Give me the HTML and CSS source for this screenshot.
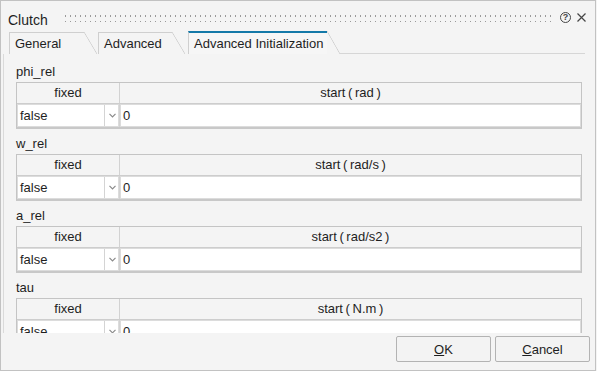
FILE: index.html
```html
<!DOCTYPE html>
<html lang="en">
<head>
  <meta charset="UTF-8" />
  <title>Clutch</title>
  <link rel="stylesheet" href="styles.css">
</head>
<body>
  <div class="dialog">
    <div class="titlebar">
      <span class="title">Clutch</span>
      <div class="grip"></div>
      <span class="help">?</span>
      <svg class="close" width="9" height="9" viewBox="0 0 9 9">
        <path d="M0.5 0.5 L8.5 8.5 M8.5 0.5 L0.5 8.5" stroke="#454545" stroke-width="1.2" fill="none"/>
      </svg>
    </div>

    <div class="tabs">
      <div class="tab tab-general">General</div>
      <div class="tab tab-advanced">Advanced</div>
      <div class="tab tab-active">Advanced Initialization</div>
      <div class="tab-fill"></div>
    </div>

    <div class="pane">
      <div class="section">
        <div class="var-label">phi_rel</div>
        <div class="grid">
          <div class="head first">fixed</div>
          <div class="head">start ( rad )</div>
          <div class="cell combo first">
            <span class="combo-text">false</span>
            <span class="combo-arrow"><svg width="7" height="5" viewBox="0 0 7 5"><path d="M0.5 0.8 L3.5 3.8 L6.5 0.8" stroke="#8a8a8a" stroke-width="1.2" fill="none"/></svg></span>
          </div>
          <div class="cell value">0</div>
        </div>
      </div>

      <div class="section">
        <div class="var-label">w_rel</div>
        <div class="grid">
          <div class="head first">fixed</div>
          <div class="head">start ( rad/s )</div>
          <div class="cell combo first">
            <span class="combo-text">false</span>
            <span class="combo-arrow"><svg width="7" height="5" viewBox="0 0 7 5"><path d="M0.5 0.8 L3.5 3.8 L6.5 0.8" stroke="#8a8a8a" stroke-width="1.2" fill="none"/></svg></span>
          </div>
          <div class="cell value">0</div>
        </div>
      </div>

      <div class="section">
        <div class="var-label">a_rel</div>
        <div class="grid">
          <div class="head first">fixed</div>
          <div class="head">start ( rad/s2 )</div>
          <div class="cell combo first">
            <span class="combo-text">false</span>
            <span class="combo-arrow"><svg width="7" height="5" viewBox="0 0 7 5"><path d="M0.5 0.8 L3.5 3.8 L6.5 0.8" stroke="#8a8a8a" stroke-width="1.2" fill="none"/></svg></span>
          </div>
          <div class="cell value">0</div>
        </div>
      </div>

      <div class="section">
        <div class="var-label">tau</div>
        <div class="grid">
          <div class="head first">fixed</div>
          <div class="head">start ( N.m )</div>
          <div class="cell combo first">
            <span class="combo-text">false</span>
            <span class="combo-arrow"><svg width="7" height="5" viewBox="0 0 7 5"><path d="M0.5 0.8 L3.5 3.8 L6.5 0.8" stroke="#8a8a8a" stroke-width="1.2" fill="none"/></svg></span>
          </div>
          <div class="cell value">0</div>
        </div>
      </div>
    </div>

    <div class="footer">
      <button type="button" class="btn"><u>O</u>K</button>
      <button type="button" class="btn"><u>C</u>ancel</button>
    </div>
  </div>
</body>
</html>
```

FILE: styles.css
```css
* {
  box-sizing: border-box;
}
body {
  margin: 0;
  background: #f4f4f4;
  font-family: "Liberation Sans", Arial, sans-serif;
  font-size: 13px;
  color: #1e1e1e;
}
.dialog {
  width: 596px;
  height: 371px;
  border: 1px solid #c2c2c2;
  background: #f4f4f4;
  display: flex;
  flex-direction: column;
  overflow: hidden;
}

/* title bar */
.titlebar {
  height: 30px;
  display: flex;
  align-items: center;
  padding: 0 9px 0 7px;
}
.title {
  font-size: 14px;
  padding-top: 7px;
}
.grip {
  flex: 1;
  height: 8px;
  margin: 4px 8px 0 15px;
  background-image: radial-gradient(circle, #9a9a9a 0.9px, transparent 1.1px);
  background-size: 5px 6px;
  background-position: 0 -1px;
}
.help {
  width: 11px;
  height: 11px;
  border: 1.2px solid #454545;
  border-radius: 50%;
  font-size: 9px;
  font-weight: bold;
  line-height: 9px;
  text-align: center;
  color: #454545;
  margin-top: 3px;
  margin-right: 6px;
}
.close {
  margin-top: 3px;
}

/* tabs */
.tabs {
  height: 23px;
  display: flex;
  align-items: flex-end;
  padding-left: 8px;
  padding-right: 10px;
}
.tab {
  position: relative;
  height: 22px;
  border-top: 1px solid #cfcfcf;
  border-left: 1px solid #cfcfcf;
  padding: 3px 0 0 5px;
  white-space: nowrap;
}
.tab::after {
  content: "";
  position: absolute;
  top: -1px;
  left: 100%;
  width: 13px;
  height: calc(100% + 1px);
  background: linear-gradient(to top right, transparent calc(50% - 0.7px), #cfcfcf, transparent calc(50% + 0.7px));
}
.tab-general {
  width: 75px;
  margin-right: 14px;
}
.tab-advanced {
  width: 74px;
  margin-right: 16px;
}
.tab-active {
  width: 139px;
  height: 23px;
  border-top: 2px solid #1479a8;
  padding-top: 3px;
  background: #f6f6f6;
}
.tab-active::after {
  top: -2px;
  height: calc(100% + 2px);
}
.tab-fill {
  flex: 1;
  margin-left: 13px;
  border-bottom: 1px solid #d6d6d6;
}

/* variable tables */
.pane {
  height: 279px;
  overflow: hidden;
  margin-left: 2px;
  border-left: 1px solid #dadada;
  padding: 10px 13px 0 12px;
}
.section {
  margin-bottom: 7px;
}
.var-label {
  height: 16px;
  line-height: 16px;
  margin-bottom: 2px;
}
.grid {
  display: grid;
  grid-template-columns: 103px 1fr;
  border: 1px solid #c4c4c4;
  border-bottom: 2px solid #c8c8c8;
}
.head {
  height: 21px;
  line-height: 20px;
  text-align: center;
  border-bottom: 1px solid #cdcdcd;
  word-spacing: -1px;
}
.first {
  border-right: 1px solid #d2d2d2;
}
.cell {
  height: 23px;
  background: #fff;
  line-height: 23px;
  box-shadow: inset 0 0 0 1px #dcdcdc;
}
.combo {
  display: flex;
}
.combo-text {
  flex: 1;
  padding-left: 3px;
}
.combo-arrow {
  width: 15px;
  border-left: 1px solid #d4d4d4;
  display: flex;
  align-items: center;
  justify-content: center;
  margin: 1px 0;
}
.value {
  padding-left: 3px;
}

/* buttons */
.footer {
  display: flex;
  justify-content: flex-end;
  gap: 4px;
  padding: 3px 5px 0 0;
}
.btn {
  width: 95px;
  height: 26px;
  background: #f3f3f3;
  border: 1px solid #b3b3b3;
  border-radius: 2px;
  font-family: "Liberation Sans", Arial, sans-serif;
  font-size: 13px;
  color: #1e1e1e;
  padding: 0;
}
```
